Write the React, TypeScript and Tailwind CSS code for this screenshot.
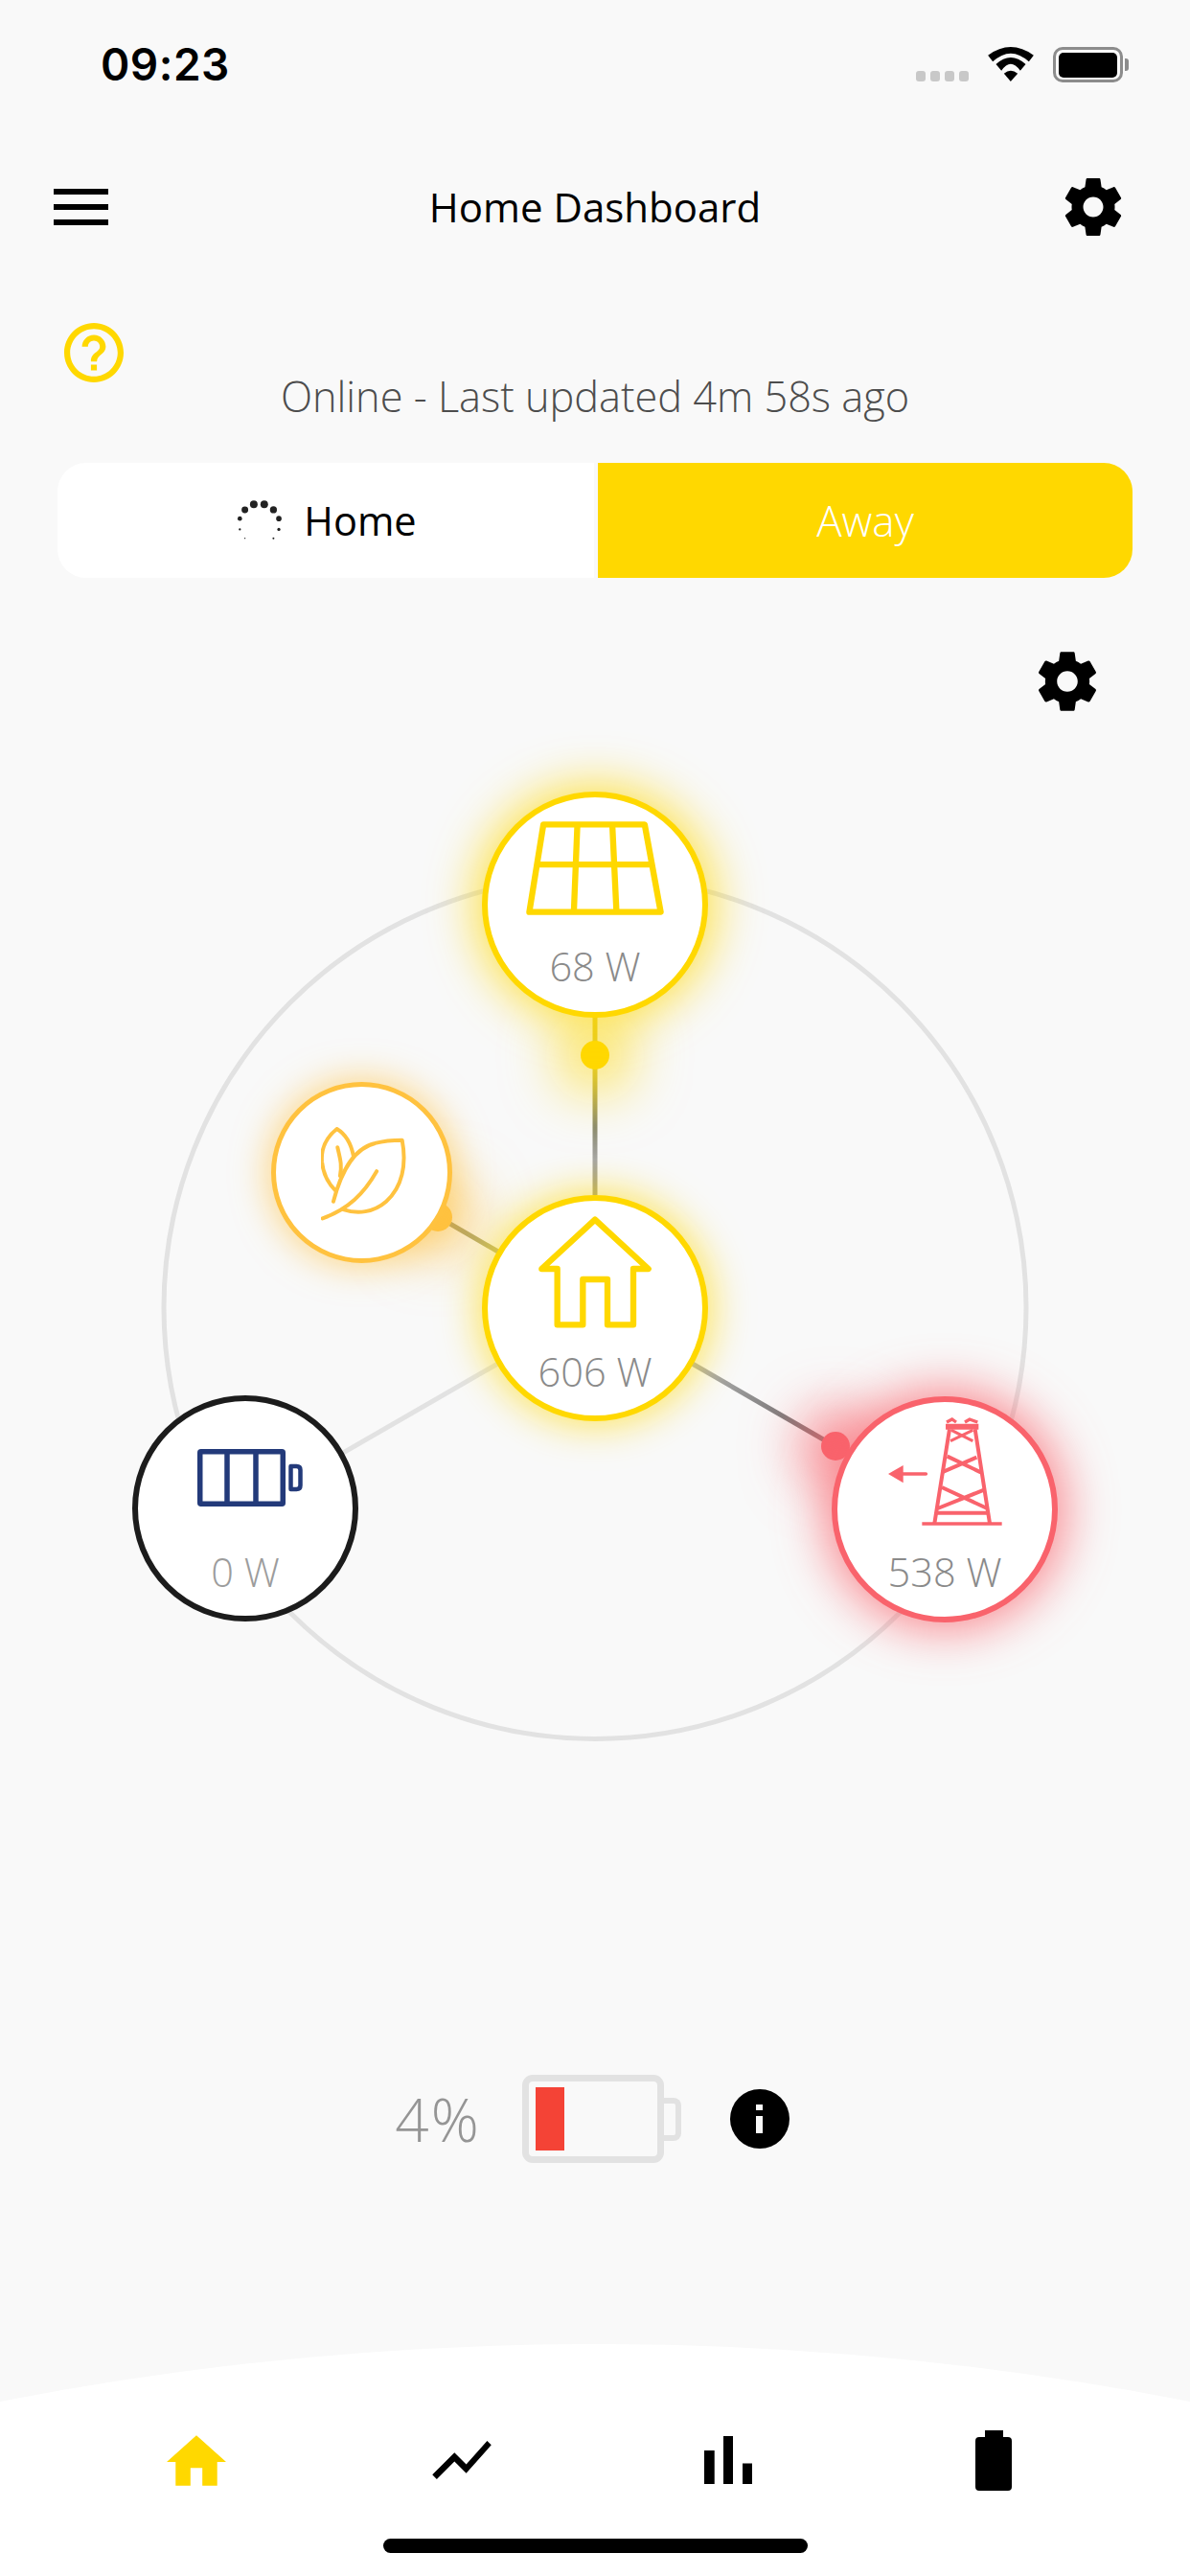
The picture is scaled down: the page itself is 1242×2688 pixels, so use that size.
import React from "react";

const YELLOW = "#FFD800";
const AMBER = "#FFC23F";
const RED = "#F9636C";
const NAVY = "#233A7A";

function Gear({ className }: { className: string }) {
  return (
    <svg viewBox="0 0 24 24" className={className} fill="#000">
      <path d="M19.43 12.98c.04-.32.07-.64.07-.98s-.03-.66-.07-.98l2.11-1.65c.19-.15.24-.42.12-.64l-2-3.46c-.12-.22-.39-.3-.61-.22l-2.49 1c-.52-.4-1.08-.73-1.69-.98l-.38-2.65C14.46 2.18 14.25 2 14 2h-4c-.25 0-.46.18-.49.42l-.38 2.65c-.61.25-1.17.59-1.69.98l-2.49-1c-.23-.09-.49 0-.61.22l-2 3.46c-.13.22-.07.49.12.64l2.11 1.65c-.04.32-.07.65-.07.98s.03.66.07.98l-2.11 1.65c-.19.15-.24.42-.12.64l2 3.46c.12.22.39.3.61.22l2.49-1c.52.4 1.08.73 1.69.98l.38 2.65c.03.24.24.42.49.42h4c.25 0 .46-.18.49-.42l.38-2.65c.61-.25 1.17-.59 1.69-.98l2.49 1c.23.09.49 0 .61-.22l2-3.46c.12-.22.07-.49-.12-.64l-2.11-1.65zM12 15.5c-1.93 0-3.5-1.57-3.5-3.5s1.57-3.5 3.5-3.5 3.5 1.57 3.5 3.5-1.57 3.5-3.5 3.5z" />
    </svg>
  );
}

function Spinner() {
  const dots = [
    [155, 202, 7], [171, 174, 10.5], [199, 157, 12], [232, 157, 12], [261, 174, 11], [278, 202, 8.5],
    [278, 236, 5], [261, 264, 3], [171, 264, 2], [155, 236, 3.5],
  ];
  return (
    <svg viewBox="145 145 145 125" className="w-[48px] h-[42px]" fill="#222">
      {dots.map(([x, y, r], i) => (
        <circle key={i} cx={x} cy={y} r={r} />
      ))}
    </svg>
  );
}

function SolarIcon() {
  return (
    <svg viewBox="298 172 430 293" className="w-[144px] h-[98px]" fill="none" stroke={YELLOW} strokeWidth="19" strokeLinejoin="round">
      <path d="M352 182H668L718 455H308Z" />
      <path d="M333 307H690M458 182L447 455M567 182L580 455" />
    </svg>
  );
}

function HouseIcon() {
  return (
    <svg viewBox="906 505 354 352" className="w-[118px] h-[118px]" fill="none" stroke={YELLOW} strokeWidth="19" strokeLinejoin="round">
      <path d="M1083 518L1250 672H1203V847H1122V705H1045V847H965V672H916Z" />
    </svg>
  );
}

function LeafIcon() {
  return (
    <svg viewBox="225 232 268 296" className="w-[89px] h-[99px]" fill="none" stroke={AMBER} strokeWidth="12" strokeLinecap="round" strokeLinejoin="round">
      <path d="M264 465C285 385 320 300 395 282C420 275 450 272 480 272C495 350 480 420 430 465C390 500 340 505 295 490" />
      <path d="M230 518C310 490 360 440 400 370" />
      <path d="M327 322C320 285 305 255 275 237C240 265 225 300 228 340C232 380 250 410 270 430" />
      <path d="M277 295C285 330 292 350 285 385" />
    </svg>
  );
}

function BatteryIcon() {
  return (
    <svg viewBox="0 0 110 60" className="ml-[10px] w-[110px] h-[60px]" fill="none" stroke={NAVY} strokeWidth="5.5" strokeLinejoin="round">
      <rect x="2.75" y="2.75" width="86.5" height="54.5" rx="1" />
      <path d="M31 3V57M61 3V57" />
      <path d="M97.5 18H103.5Q107.5 18 107.5 22V38Q107.5 42 103.5 42H97.5Z" strokeWidth="4.5" />
    </svg>
  );
}

function TowerIcon() {
  return (
    <svg viewBox="385 178 357 339" className="w-[119px] h-[113px]" fill="none" stroke={RED} strokeWidth="12">
      <path d="M491 511H741" strokeWidth="10" />
      <path d="M530 510L577 215M703 510L657 215" />
      <path d="M533 477H697" />
      <path d="M540 463L685 405M553 397L695 463" />
      <path d="M553 350L662 303M570 300L675 350" />
      <path d="M583 218L650 252M650 218L580 252" strokeWidth="9" />
      <path d="M565 207H668" strokeWidth="18" />
      <path d="M568 193L585 184L598 193M625 193L640 184L665 193" strokeWidth="10" />
      <path d="M430 355H503" strokeWidth="11" strokeLinecap="round" />
      <path d="M385 355L432 328V383Z" fill={RED} stroke="none" />
    </svg>
  );
}

function Value({ children, light }: { children: React.ReactNode; light?: boolean }) {
  return (
    <div className={`text-[41.5px] leading-[48px] font-light ${light ? "text-[#9c9c9c]" : "text-[#8a8a8a]"}`}>{children}</div>
  );
}

export default function App() {
  return (
    <div
      className="relative flex h-[2688px] w-[1242px] flex-col overflow-hidden bg-[#f9f9f9] text-black"
      style={{ fontFamily: '"Open Sans", sans-serif' }}
    >
      {/* status bar */}
      <div className="flex h-[150px] shrink-0 items-start justify-between pl-[105px] pr-[64px] pt-[42px]">
        <span className="text-[46px] font-semibold leading-[50px] tracking-[0.5px]" style={{ fontFamily: "Inter, sans-serif" }}>09:23</span>
        <div className="flex items-start pt-[7px]">
          <div className="mt-[25px] flex gap-[4.5px]">
            <i className="block h-[11px] w-[10.5px] rounded-[3px] bg-[#c8c8c8]" />
            <i className="block h-[11px] w-[10.5px] rounded-[3px] bg-[#c8c8c8]" />
            <i className="block h-[11px] w-[10.5px] rounded-[3px] bg-[#c8c8c8]" />
            <i className="block h-[11px] w-[10.5px] rounded-[3px] bg-[#c8c8c8]" />
          </div>
          <svg viewBox="275 42 143 108" className="ml-[20px] h-[36px] w-[48px]" fill="#000">
            <path d="M275 68Q346 16 418 68L403 88Q346 36 290 88Z" />
            <path d="M300 96Q346 54 393 96L376 116Q346 74 317 116Z" />
            <path d="M325 125Q346 107 368 125L346 150Z" />
          </svg>
          <div className="ml-[20px] flex items-center">
            <div className="flex h-[37px] w-[73px] items-center justify-center rounded-[10px] border-[3px] border-[#8c8c8c]">
              <div className="h-[26px] w-[61px] rounded-[5px] bg-black" />
            </div>
            <div className="ml-[2px] h-[13px] w-[4px] rounded-r-[3px] bg-[#8c8c8c]" />
          </div>
        </div>
      </div>

      {/* header */}
      <div className="flex h-[132px] shrink-0 items-center pl-[56px] pr-[65px]">
        <div className="flex w-[57px] flex-col gap-[10px]">
          <div className="h-[6px] bg-black" />
          <div className="h-[6px] bg-black" />
          <div className="h-[6px] bg-black" />
        </div>
        <div className="flex-1 pl-[24px] text-center text-[42px] leading-[56px] text-black">Home Dashboard</div>
        <Gear className="h-[72px] w-[72px]" />
      </div>

      {/* help */}
      <div className="shrink-0 pl-[67px] pt-[55px]">
        <svg viewBox="2 2 20 20" className="h-[62px] w-[62px]" fill={YELLOW}>
          <path d="M11 18h2v-2h-2v2zm1-16C6.48 2 2 6.48 2 12s4.48 10 10 10 10-4.48 10-10S17.52 2 12 2zm0 18c-4.41 0-8-3.59-8-8s3.59-8 8-8 8 3.59 8 8-3.59 8-8 8zm0-14c-2.21 0-4 1.79-4 4h2c0-1.1.9-2 2-2s2 .9 2 2c0 2-3 1.75-3 5h2c0-2.25 3-2.5 3-5 0-2.21-1.79-4-4-4z" />
        </svg>
      </div>
      <div className="-mt-[13px] shrink-0 text-center text-[43.3px] font-light leading-[56px] text-[#4d4d4d]">Online - Last updated 4m 58s ago</div>

      {/* segmented */}
      <div className="mx-[60px] mt-[41px] flex h-[120px] shrink-0 gap-[4px] overflow-hidden rounded-[30px] leading-[56px]">
        <div className="flex flex-1 items-center justify-center gap-[22px] bg-white pl-[2px] text-[41.5px]">
          <Spinner />
          <span>Home</span>
        </div>
        <div className="flex flex-1 items-center justify-center bg-[#FFD800] text-[44px] font-light text-white">Away</div>
      </div>

      {/* diagram gear */}
      <div className="mt-[71px] flex shrink-0 justify-end pr-[91px]">
        <Gear className="h-[74px] w-[74px]" />
      </div>

      {/* diagram: free canvas, origin at page y = 756 */}
      <div className="relative mt-[8px] h-[1100px] shrink-0">
        <svg viewBox="0 756 1242 1100" className="absolute inset-0 h-[1100px] w-[1242px]" fill="none">
          <defs>
            <linearGradient id="v" x1="0" y1="1061" x2="0" y2="1247" gradientUnits="userSpaceOnUse">
              <stop offset="0" stopColor="#e3c92a" />
              <stop offset="0.3" stopColor="#d5c23e" />
              <stop offset="0.62" stopColor="#8a8a70" />
              <stop offset="0.8" stopColor="#a6a6a6" />
              <stop offset="1" stopColor="#a8a27a" />
            </linearGradient>
            <linearGradient id="g" x1="720" y1="1422" x2="880" y2="1514" gradientUnits="userSpaceOnUse">
              <stop offset="0" stopColor="#b5b5b5" />
              <stop offset="0.6" stopColor="#7d7d7d" />
              <stop offset="1" stopColor="#9a7070" />
            </linearGradient>
            <linearGradient id="l" x1="460" y1="1272" x2="520" y2="1306" gradientUnits="userSpaceOnUse">
              <stop offset="0" stopColor="#8f8a66" />
              <stop offset="1" stopColor="#bcb878" />
            </linearGradient>
          </defs>
          <circle cx="621" cy="1364.5" r="450" stroke="#e2e2e2" strokeWidth="5" />
          <line x1="621" y1="1364.5" x2="256.5" y2="1574.5" stroke="#e2e2e2" strokeWidth="5" />
          <line x1="621" y1="1061" x2="621" y2="1247" stroke="url(#v)" strokeWidth="5" />
          <line x1="450" y1="1265.5" x2="525" y2="1309" stroke="url(#l)" strokeWidth="5" />
          <line x1="720" y1="1421.5" x2="880" y2="1514" stroke="url(#g)" strokeWidth="5" />
        </svg>

        {/* flow dots */}
        <div className="absolute left-[606px] top-[330px] h-[30px] w-[30px] rounded-full bg-[#FFD800] shadow-[0_0_55px_26px_rgba(255,216,0,0.55)]" />
        <div className="absolute left-[442px] top-[499px] h-[30px] w-[30px] rounded-full bg-[#FFC23F] shadow-[0_0_55px_26px_rgba(255,194,63,0.6)]" />
        <div className="absolute left-[857px] top-[738px] h-[30px] w-[30px] rounded-full bg-[#F9636C] shadow-[0_0_55px_26px_rgba(249,99,108,0.6)]" />

        {/* solar */}
        <div className="absolute left-[503px] top-[70px] flex h-[236px] w-[236px] flex-col items-center rounded-full border-[6px] border-[#FFD800] bg-white pt-[25px] shadow-[0_0_50px_6px_rgba(255,216,0,0.75)]">
          <div className="h-[127px]"><SolarIcon /></div>
          <Value>68 W</Value>
        </div>

        {/* leaf */}
        <div className="absolute left-[283px] top-[373px] flex h-[189px] w-[189px] items-center justify-center rounded-full border-[5px] border-[#FFC23F] bg-white pl-[4px] pt-[3px] shadow-[0_0_36px_4px_rgba(255,194,63,0.6)]">
          <LeafIcon />
        </div>

        {/* home */}
        <div className="absolute left-[503px] top-[491px] flex h-[236px] w-[236px] flex-col items-center rounded-full border-[6px] border-[#FFD800] bg-white pt-[15px] shadow-[0_0_40px_4px_rgba(255,216,0,0.65)]">
          <div className="h-[139px]"><HouseIcon /></div>
          <Value>606 W</Value>
        </div>

        {/* battery */}
        <div className="absolute left-[138px] top-[700px] flex h-[236px] w-[236px] flex-col items-center rounded-full border-[6px] border-[#1c1c1c] bg-white pt-[50px]">
          <div className="h-[104px]"><BatteryIcon /></div>
          <Value light>0 W</Value>
        </div>

        {/* grid */}
        <div className="absolute left-[868px] top-[701px] flex h-[236px] w-[236px] flex-col items-center rounded-full border-[6px] border-[#F9636C] bg-white pt-[16px] shadow-[0_0_50px_8px_rgba(249,99,108,0.75)]">
          <div className="h-[137px]"><TowerIcon /></div>
          <Value>538 W</Value>
        </div>
      </div>

      {/* battery state */}
      <div className="mt-[309px] flex shrink-0 items-center justify-center pr-[6px]">
        <span className="text-[62px] font-light leading-[92px] tracking-[2px] text-[#959595]">4%</span>
        <div className="ml-[43px] flex items-center">
          <div className="h-[92px] w-[148px] rounded-[11px] border-[7px] border-[#e2e2e2] py-[6px] pl-[7px]">
            <div className="h-[66px] w-[30px] bg-[#F44336]" />
          </div>
          <div className="h-[45px] w-[18px] rounded-r-[8px] border-y-[6px] border-r-[6px] border-[#e2e2e2]" />
        </div>
        <div className="ml-[51px] flex h-[62px] w-[62px] flex-col items-center justify-center gap-[6px] rounded-full bg-black">
          <div className="h-[6px] w-[7px] bg-[#f9f9f9]" />
          <div className="h-[18px] w-[7px] bg-[#f9f9f9]" />
        </div>
      </div>

      {/* tab bar */}
      <div className="mt-auto shrink-0">
        <svg viewBox="0 0 1242 60" className="block h-[60px] w-[1242px]" fill="#fff">
          <path d="M0 60A3243 3243 0 0 1 1242 60Z" />
        </svg>
        <div className="bg-white">
          <div className="grid h-[122px] grid-cols-4 items-center px-[66px]">
            <div className="flex justify-center">
              <svg viewBox="2 3 20 17" className="h-[53px] w-[62px]" fill={YELLOW}><path d="M10 20v-6h4v6h5v-8h3L12 3 2 12h3v8z" /></svg>
            </div>
            <div className="flex justify-center">
              <svg viewBox="2 5.5 20 13" className="h-[40px] w-[62px]" fill="#000"><path d="M3.5 18.49l6-6.01 4 4L22 6.92l-1.41-1.41-7.09 7.97-4-4L2 16.99z" /></svg>
            </div>
            <div className="flex justify-center">
              <svg viewBox="5 5 14 14" className="h-[50px] w-[50px]" fill="#000"><path d="M5 9.2h3V19H5zM10.6 5h2.8v14h-2.8zm5.6 8H19v6h-2.8z" /></svg>
            </div>
            <div className="flex justify-center">
              <svg viewBox="0 0 38 63" className="h-[63px] w-[38px]" fill="#000"><path d="M10 0H29V7H34Q38 7 38 11V59Q38 63 34 63H4Q0 63 0 59V11Q0 7 4 7H10Z" /></svg>
            </div>
          </div>
          <div className="flex h-[60px] justify-center pt-[21px]">
            <div className="h-[15px] w-[443px] rounded-full bg-black" />
          </div>
        </div>
      </div>
    </div>
  );
}
